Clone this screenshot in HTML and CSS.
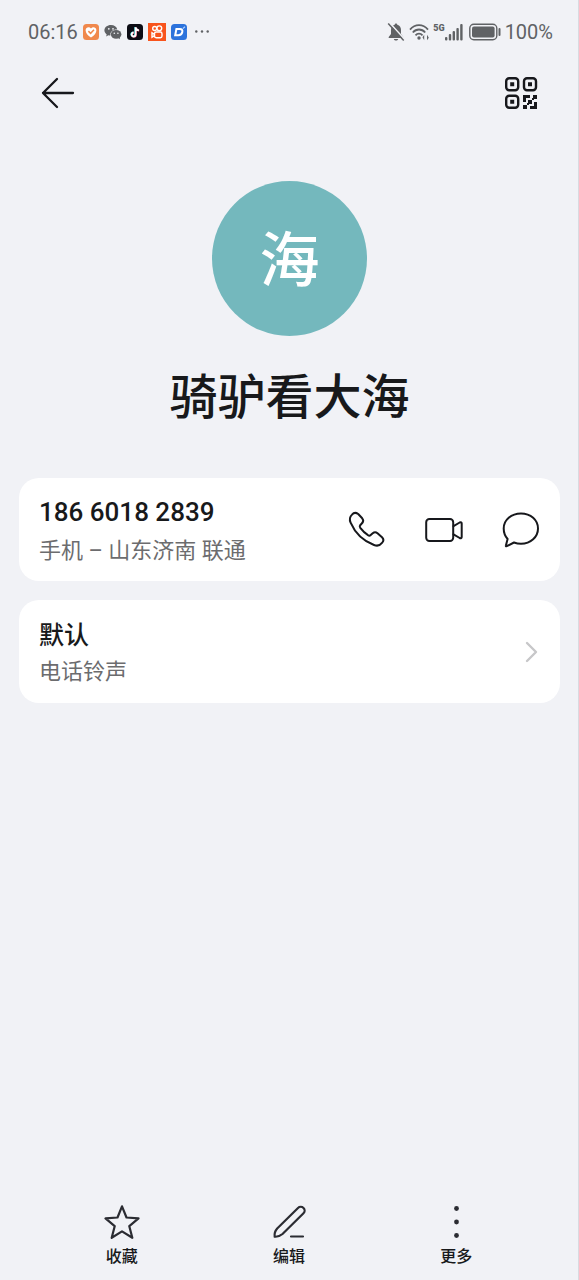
FILE: index.html
```html
<!DOCTYPE html>
<html lang="zh-CN">
<head>
<meta charset="utf-8">
<meta name="viewport" content="width=device-width, initial-scale=1">
<title>骑驴看大海</title>
<link rel="stylesheet" href="styles.css">
</head>
<body>
<div class="screen">
  <header class="status">
    <div class="status-group">
      <span class="clock">06:16</span>
      <svg class="app" viewBox="0 0 16 16" aria-hidden="true"><rect width="16" height="16" rx="3.5" fill="#f0884c"/><path d="M8 13.6C4.8 11.3 2.6 9 2.6 6.2 2.6 3.2 6.300 2.200 8 4.400c1.700-2.200 5.400-1.200 5.400 1.800 0 2.800-2.200 5.100-5.400 7.400z" fill="#fff"/><path d="M5.400 7.100l2.200 2.200 3.400-3.600" fill="none" stroke="#f0884c" stroke-width="1.500"/></svg>
      <svg class="chat-app" viewBox="0 0 18 16" aria-hidden="true"><path d="M7 1C3.200 1 .4 3.300.4 6.300c0 1.700.9 3.100 2.300 4.100l-.6 2 2.300-1.200c.7.200 1.300.3 2 .3-.7-3.600 2.300-6.300 6.900-6.100C12.700 2.800 10.200 1 7 1z" fill="#5f6164"/><ellipse cx="12.100" cy="10.300" rx="5.300" ry="4.400" fill="#5f6164"/><path d="M13.500 13.500l2.500 1.800-.4-3z" fill="#5f6164"/><g fill="#f1f2f6"><circle cx="4.800" cy="4.800" r=".9"/><circle cx="9" cy="4.800" r=".9"/><circle cx="10.300" cy="9.200" r=".8"/><circle cx="13.900" cy="9.200" r=".8"/></g></svg>
      <svg class="app" viewBox="0 0 16 16" aria-hidden="true"><rect width="16" height="16" rx="3.500" fill="#0c0c14"/><g fill="none" stroke-width="1.800"><path d="M8.200 3v7.300a2 2 0 1 1-2-2M8.200 3.200c.2 1.700 1.500 2.900 3.300 3" stroke="#35d8dc"/><path d="M9 3.400v7.300a2 2 0 1 1-2-2M9 3.600c.2 1.700 1.500 2.900 3.300 3" stroke="#e94468"/><path d="M8.600 3.200v7.300a2 2 0 1 1-2-2M8.600 3.400c.2 1.700 1.500 2.900 3.300 3" stroke="#fff"/></g></svg>
      <svg class="app-large" viewBox="0 0 18 18" aria-hidden="true"><rect width="18" height="18" fill="#f8541c"/><g fill="none" stroke="#fff" stroke-width="1.400"><circle cx="6.700" cy="5.500" r="2"/><circle cx="11.300" cy="5.300" r="2.400"/><rect x="6.500" y="9" width="7.500" height="5.800" rx="1.700"/><path d="M6.500 11.300L4 9.800v4.400l2.500-1.500"/></g></svg>
      <svg class="app" viewBox="0 0 16 16" aria-hidden="true"><rect width="16" height="16" rx="3.500" fill="#2c73dc"/><path d="M5.400 5h3.500c2 0 2.800 1.200 2.400 3-.4 2-1.900 3.200-4 3.200H4.200z" fill="none" stroke="#fff" stroke-width="2"/><path d="M11.800 4.600l2.200-1.800" stroke="#b8d6ff" stroke-width="1.200"/></svg>
      <svg class="app more" viewBox="0 0 16 16" aria-hidden="true" fill="#606265"><circle cx="2.300" cy="7.500" r="1.200"/><circle cx="8" cy="7.500" r="1.200"/><circle cx="13.700" cy="7.500" r="1.200"/></svg>
    </div>
    <div class="status-group tight">
      <svg class="bell" viewBox="0 0 18 20" aria-hidden="true"><path d="M9 1.500c.9 0 1.300.6 1.300 1.300C12.900 3.500 14 5.500 14 8v4l2.300 3v1H1.700v-1L4 12V8c0-2.500 1.100-4.500 3.700-5.200 0-.7.400-1.300 1.300-1.300zM6.800 17h4.400c-.4 1.200-1.200 1.600-2.200 1.600S7.200 18.200 6.800 17z" fill="#606265"/><path d="M2.500.7l15 16.500" stroke="#f1f2f6" stroke-width="1.700"/><path d="M1.200 1.500l15.500 17" stroke="#606265" stroke-width="1.500"/></svg>
      <svg class="wifi" viewBox="0 0 20 18" aria-hidden="true"><g fill="none" stroke="#606265" stroke-width="1.800"><path d="M1 6.600C6 .7 14 .7 19 6.600M3.800 9.500c3.500-4 8.900-4 12.400 0M6.500 12.300c2-2.300 5-2.300 7 0"/></g><circle cx="10" cy="15" r="1.700" fill="#606265"/><path d="M13.500 14.200l1.700-2.400v5.400zM19.800 14.800L18 17.200v-5.400z" fill="#606265"/></svg>
      <div class="mobile">
        <span class="network">5G</span>
        <svg class="signal" viewBox="0 0 18 18" aria-hidden="true" fill="#606265"><rect x="0" y="14" width="2.400" height="3.500" rx="1"/><rect x="3.800" y="11" width="2.400" height="6.500" rx="1"/><rect x="7.600" y="8" width="2.400" height="9.500" rx="1"/><rect x="11.400" y="5" width="2.400" height="12.500" rx="1"/><rect x="15.200" y="1" width="2.400" height="16.500" rx="1"/></svg>
      </div>
      <svg class="battery" viewBox="0 0 32 18" aria-hidden="true"><rect x=".8" y="1.300" width="27" height="15.400" rx="4" fill="none" stroke="#606265" stroke-width="1.400"/><rect x="3" y="3.500" width="22.600" height="11" rx="2" fill="#606265"/><path d="M30.500 6v6" stroke="#606265" stroke-width="2" stroke-linecap="round"/></svg>
      <span class="clock">100%</span>
    </div>
  </header>

  <nav class="toolbar" aria-label="顶部">
    <button class="icon-button" type="button" aria-label="返回"><svg class="icon" viewBox="0 0 36 36"><path d="M33 18H3M17 4L3 18l14 14" fill="none" stroke="#17181c" stroke-width="2.300" stroke-linecap="round" stroke-linejoin="round"/></svg></button>
    <button class="icon-button" type="button" aria-label="二维码"><svg class="icon" viewBox="0 0 36 36" fill="#17181c"><g fill="none" stroke="#17181c" stroke-width="2.400"><rect x="3.200" y="3.200" width="12" height="12" rx="3"/><rect x="21" y="3.200" width="12" height="12" rx="3"/><rect x="3.200" y="20.800" width="12" height="12" rx="3"/></g><path d="M7.200 7.200h4v4h-4zM25 7.200h4v4h-4zM7.200 24.800h4v4h-4zM20 20h7v3h-4v4h-3zM30 20h4v4h-4zM25 25h4v4h-4zM29 23h2v2h-2zM20 30h4v4h-4zM24 28h2v2h-2zM31 27h3v7h-7v-3h4z"/></svg></button>
  </nav>

  <main class="content">
    <section class="profile">
      <div class="avatar" aria-hidden="true">海</div>
      <h1 class="name">骑驴看大海</h1>
    </section>

    <section class="card">
      <div class="details">
        <p class="number">186 6018 2839</p>
        <p class="caption">手机 – 山东济南 联通</p>
      </div>
      <div class="actions">
        <button class="icon-button" type="button" aria-label="拨打电话"><svg class="icon-action" viewBox="0 0 40 40"><path d="M5 4.600c1.700-2 4.300-2 6.200-.6l4 4.300c1.300 1.500 1.300 3 .2 4.500l-2.200 2.400c-.7.900-.6 1.700.1 2.700 2.200 2.900 4.900 5.500 7.700 7.300 1 .7 1.900.6 2.700-.2l2-1.800c1.500-1.200 3.300-1.200 4.800 0l4.500 4c1.900 2 1.600 4.100 0 5.700-2 2.600-4.700 3.400-8 2.100C16.500 31 8 22.700 3.600 12.600 2.300 9.500 2.800 6.700 5 4.600z"/></svg></button>
        <button class="icon-button" type="button" aria-label="视频通话"><svg class="icon-action" viewBox="0 0 40 40"><rect x="2.200" y="9" width="27" height="22" rx="3.200"/><path d="M29.500 16.200l6.200-3.700c1.200-.6 2 0 2 1.100v13.300c0 1.100-.8 1.700-2 1.100l-6.200-3.700"/></svg></button>
        <button class="icon-button" type="button" aria-label="发送信息"><svg class="icon-action" viewBox="0 0 40 40"><path d="M20 3.500c9.700 0 17 6.500 17 15s-7.300 15.300-17 15.300c-2.300 0-4.700-.4-7-1.300l-7.300 3.700c-.7.300-1 0-.8-.7L6.600 29C4.200 26.300 2.700 23 2.700 18.500 2.700 10 10.300 3.500 20 3.500z"/></svg></button>
      </div>
    </section>

    <a class="card" href="#ringtone">
      <span class="details compact">
        <span class="setting">默认</span>
        <span class="caption">电话铃声</span>
      </span>
      <svg class="chevron" viewBox="0 0 16 24" aria-hidden="true"><path d="M2 3l9 9-9 9" fill="none" stroke="#c7c7c9" stroke-width="2.400" stroke-linecap="round" stroke-linejoin="round"/></svg>
    </a>
  </main>

  <nav class="bottom" aria-label="联系人操作">
    <button class="tab" type="button"><svg class="icon" viewBox="0 0 36 36"><path d="M18 2.300l4.500 11.200 12 .9-9.200 7.800 3 11.600L18 27.400 7.700 33.800l3-11.600-9.200-7.800 12-.9z" fill="none" stroke="#2b2c32" stroke-width="2.200" stroke-linejoin="round"/></svg>收藏</button>
    <button class="tab" type="button"><svg class="icon" viewBox="0 0 36 36"><path d="M27 4c1.500-1.500 4-1.500 5.500 0s1.500 3.800 0 5.300L11.500 30c-2.400 2-5 3-7.800 2.700-.5-3 .3-5.700 2.500-8.200zM20 32.500h12" fill="none" stroke="#2b2c32" stroke-width="2.200" stroke-linecap="round" stroke-linejoin="round"/></svg>编辑</button>
    <button class="tab" type="button"><svg class="icon" viewBox="0 0 36 36" fill="#2b2c32"><circle cx="18.500" cy="4.500" r="2.400"/><circle cx="18.500" cy="18" r="2.400"/><circle cx="18.500" cy="31.500" r="2.400"/></svg>更多</button>
  </nav>
</div>
</body>
</html>
```
FILE: styles.css
```css
* { box-sizing: border-box; }

body {
  margin: 0;
  background: #f1f2f6;
  color: #18191b;
  font-family: Roboto, "Noto Sans CJK SC", sans-serif;
}

button {
  margin: 0;
  padding: 0;
  border: 0;
  background: none;
  color: inherit;
  font: inherit;
}

svg { display: block; flex: none; }
h1, p { margin: 0; }

.screen {
  display: flex;
  flex-direction: column;
  min-height: 100vh;
  border-right: 1px solid #d9dae0;
}

.status {
  display: flex;
  align-items: center;
  justify-content: space-between;
  height: 64px;
  padding: 0 25px 0 28px;
  color: #606265;
}

.status-group { display: flex; align-items: center; gap: 5px; }
.tight { gap: 4px; }
.clock { font-size: 20px; line-height: 24px; }
.app { width: 16px; height: 16px; }
.more { margin-left: 2px; }
.app-large { width: 18px; height: 18px; }
.chat-app { width: 18px; height: 16px; }
.bell { width: 18px; height: 20px; }
.wifi { width: 20px; height: 18px; }
.mobile { display: flex; align-items: flex-start; margin-right: 2px; }
.network { font-size: 9px; line-height: 10px; font-weight: 900; }
.signal { width: 18px; height: 18px; }
.battery { width: 32px; height: 18px; }

.toolbar {
  display: flex;
  justify-content: space-between;
  padding: 11px 39px 0 40px;
}

.icon { width: 36px; height: 36px; }

.content { flex: 1; padding: 0 18px 0 19px; }

.profile {
  display: flex;
  flex-direction: column;
  align-items: center;
  gap: 26px;
  padding: 70px 0 44px;
}

.avatar {
  display: flex;
  align-items: center;
  justify-content: center;
  width: 155px;
  height: 155px;
  padding-top: 6px;
  border-radius: 50%;
  background: #74b8bd;
  color: #fff;
  font-size: 60px;
  line-height: 72px;
  font-weight: 500;
}

.name { font-size: 48px; line-height: 72px; font-weight: 500; }

.card {
  display: flex;
  align-items: center;
  justify-content: space-between;
  min-height: 103px;
  margin-bottom: 19px;
  padding: 12px 19px 12px 20px;
  border-radius: 20px;
  background: #fff;
  color: inherit;
  text-decoration: none;
}

.details { display: flex; flex-direction: column; gap: 5px; padding-top: 2px; }
.compact { gap: 2px; }
.number { font-size: 26px; line-height: 36px; font-weight: 500; }
.setting { font-size: 25px; line-height: 36px; font-weight: 500; }
.caption { color: #6c6c6e; font-size: 22px; line-height: 32px; }

.actions { display: flex; gap: 37px; }

.icon-action {
  width: 40px;
  height: 40px;
  fill: none;
  stroke: #17181c;
  stroke-width: 2;
  stroke-linecap: round;
  stroke-linejoin: round;
}

.chevron { width: 16px; height: 24px; }

.bottom {
  display: flex;
  justify-content: center;
  padding: 0 38px 11px;
}

.tab {
  display: flex;
  flex: 1;
  flex-direction: column;
  align-items: center;
  gap: 5px;
  font-size: 16px;
  line-height: 24px;
  font-weight: 500;
}
```
